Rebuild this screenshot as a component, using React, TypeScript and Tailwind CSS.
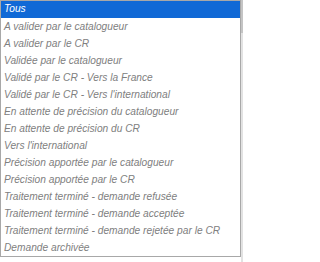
const options = [
  "Tous",
  "A valider par le catalogueur",
  "A valider par le CR",
  "Validée par le catalogueur",
  "Validé par le CR - Vers la France",
  "Validé par le CR - Vers l'international",
  "En attente de précision du catalogueur",
  "En attente de précision du CR",
  "Vers l'international",
  "Précision apportée par le catalogueur",
  "Précision apportée par le CR",
  "Traitement terminé - demande refusée",
  "Traitement terminé - demande acceptée",
  "Traitement terminé - demande rejetée par le CR",
  "Demande archivée",
];

export default function App() {
  return (
    <div className="flex h-[262px] w-[243px] overflow-hidden bg-white font-['Liberation_Sans',Arial,sans-serif]">
      <ul className="h-[257px] w-[241px] shrink-0 border border-[#a8a8a8] bg-white">
        {options.map((label, i) => (
          <li
            key={label}
            className={
              i === 0
                ? "h-[17px] bg-[#1069d6] pl-[3px] text-[10.2px] leading-[16px] italic text-white"
                : "h-[17px] pl-[3px] text-[10.2px] leading-[17px] italic whitespace-nowrap text-[#808080]"
            }
          >
            {label}
          </li>
        ))}
      </ul>
      <div className="flex w-[2px] flex-col">
        <div className="h-[33px] bg-[#c4c4c4]" />
        <div className="flex-1 bg-[#e2e2e2]" />
      </div>
    </div>
  );
}
